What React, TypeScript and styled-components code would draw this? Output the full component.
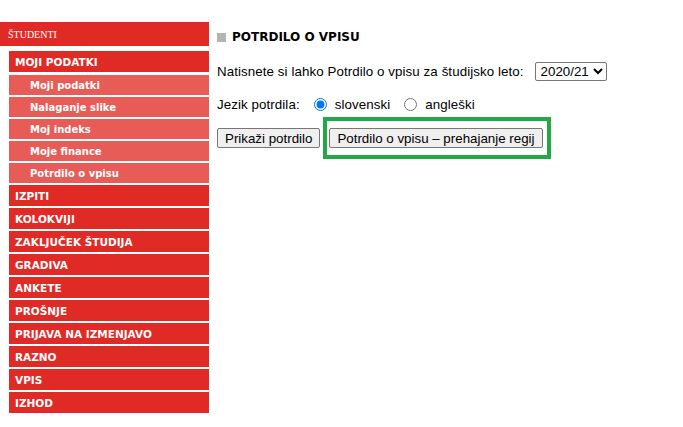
import React from "react";
import styled, { createGlobalStyle } from "styled-components";

const GlobalStyle = createGlobalStyle`
  html, body { margin: 0; padding: 0; background: #ffffff; }
  body { font-family: "Liberation Sans", Arial, sans-serif; color: #000; }
`;

const RED = "#e02a26";
const LIGHT_RED = "#e85c58";

const Page = styled.div`
  display: flex;
  align-items: flex-start;
  width: 683px;
  height: 427px;
  box-sizing: border-box;
  padding-top: 22px;
`;

const Sidebar = styled.nav`
  width: 209px;
  display: flex;
  flex-direction: column;
  flex-shrink: 0;
`;

const SideHeader = styled.div`
  height: 24px;
  background: ${RED};
  color: #fff;
  font-family: "Liberation Serif", "Times New Roman", serif;
  font-size: 10px;
  display: flex;
  align-items: center;
  padding-left: 8px;
  margin-bottom: 5px;
`;

const Menu = styled.ul`
  list-style: none;
  margin: 0 0 0 9px;
  padding: 0;
  display: flex;
  flex-direction: column;
`;

const MenuItem = styled.li<{ $sub?: boolean; $gap?: number }>`
  height: ${(p) => (p.$sub ? 20 : 21)}px;
  margin-bottom: ${(p) => p.$gap ?? 2}px;
  background: ${(p) => (p.$sub ? LIGHT_RED : RED)};
  color: #fff;
  font-family: "DejaVu Sans", Verdana, sans-serif;
  font-weight: bold;
  font-size: ${(p) => (p.$sub ? 10 : 10.5)}px;
  display: flex;
  align-items: center;
  padding-left: ${(p) => (p.$sub ? 21 : 6)}px;
  white-space: nowrap;
`;

const Content = styled.main`
  margin-left: 8px;
  display: flex;
  flex-direction: column;
  padding-top: 8px;
`;

const Title = styled.h1`
  margin: 0;
  height: 14px;
  display: flex;
  align-items: center;
  gap: 6px;
  font-family: "DejaVu Sans", Verdana, sans-serif;
  font-weight: bold;
  font-size: 12px;
  color: #000;
`;

const TitleSquare = styled.span`
  width: 9px;
  height: 9px;
  background: #b1b6b1;
  display: inline-block;
`;

const Row = styled.div<{ $top: number; $h: number }>`
  margin-top: ${(p) => p.$top}px;
  height: ${(p) => p.$h}px;
  display: flex;
  align-items: center;
  font-size: 13.333px;
  letter-spacing: 0.08px;
  white-space: nowrap;
`;

const Select = styled.select`
  margin-left: 11px;
  font-family: "Liberation Sans", Arial, sans-serif;
  font-size: 13.333px;
  letter-spacing: 0;
  height: 19px;
  width: 72px;
  padding: 0 0 0 1px;
  border: 1px solid #767676;
  border-radius: 2px;
  background: #fff;
  color: #000;
`;

const Radio = styled.input`
  width: 13px;
  height: 13px;
  margin: 0 8px 0 0;
  accent-color: #0075ff;
`;

const RadioLabel = styled.label`
  display: inline-flex;
  align-items: center;
  margin-left: 14px;
`;

const Button = styled.button`
  font-family: "Liberation Sans", Arial, sans-serif;
  font-size: 13.333px;
  letter-spacing: 0;
  height: 20px;
  padding: 0 7px;
  background: #efefef;
  border: 1px solid #767676;
  border-radius: 2px;
  color: #000;
`;

const Highlight = styled.span`
  display: inline-flex;
  align-items: center;
  margin-left: 3px;
  margin-top: -11px;
  margin-bottom: -11px;
  padding: 7px 4px 7px 2px;
  border: 4px solid #23a847;
`;

const mainItems = [
  "IZPITI",
  "KOLOKVIJI",
  "ZAKLJUČEK ŠTUDIJA",
  "GRADIVA",
  "ANKETE",
  "PROŠNJE",
  "PRIJAVA NA IZMENJAVO",
  "RAZNO",
  "VPIS",
  "IZHOD",
];

const subItems = [
  "Moji podatki",
  "Nalaganje slike",
  "Moj indeks",
  "Moje finance",
  "Potrdilo o vpisu",
];

export default function App() {
  return (
    <>
      <GlobalStyle />
      <Page>
        <Sidebar>
          <SideHeader>ŠTUDENTI</SideHeader>
          <Menu>
            <MenuItem $gap={3}>MOJI PODATKI</MenuItem>
            {subItems.map((s) => (
              <MenuItem key={s} $sub>
                {s}
              </MenuItem>
            ))}
            {mainItems.map((s) => (
              <MenuItem key={s}>{s}</MenuItem>
            ))}
          </Menu>
        </Sidebar>
        <Content>
          <Title>
            <TitleSquare />
            POTRDILO O VPISU
          </Title>
          <Row $top={16} $h={22}>
            Natisnete si lahko Potrdilo o vpisu za študijsko leto:
            <Select defaultValue="2020/21">
              <option>2020/21</option>
              <option>2019/20</option>
            </Select>
          </Row>
          <Row $top={12} $h={21}>
            Jezik potrdila:
            <RadioLabel>
              <Radio type="radio" name="jezik" defaultChecked />
              slovenski
            </RadioLabel>
            <RadioLabel>
              <Radio type="radio" name="jezik" />
              angleški
            </RadioLabel>
          </Row>
          <Row $top={13} $h={20}>
            <Button>Prikaži potrdilo</Button>
            <Highlight>
              <Button>Potrdilo o vpisu – prehajanje regij</Button>
            </Highlight>
          </Row>
        </Content>
      </Page>
    </>
  );
}
